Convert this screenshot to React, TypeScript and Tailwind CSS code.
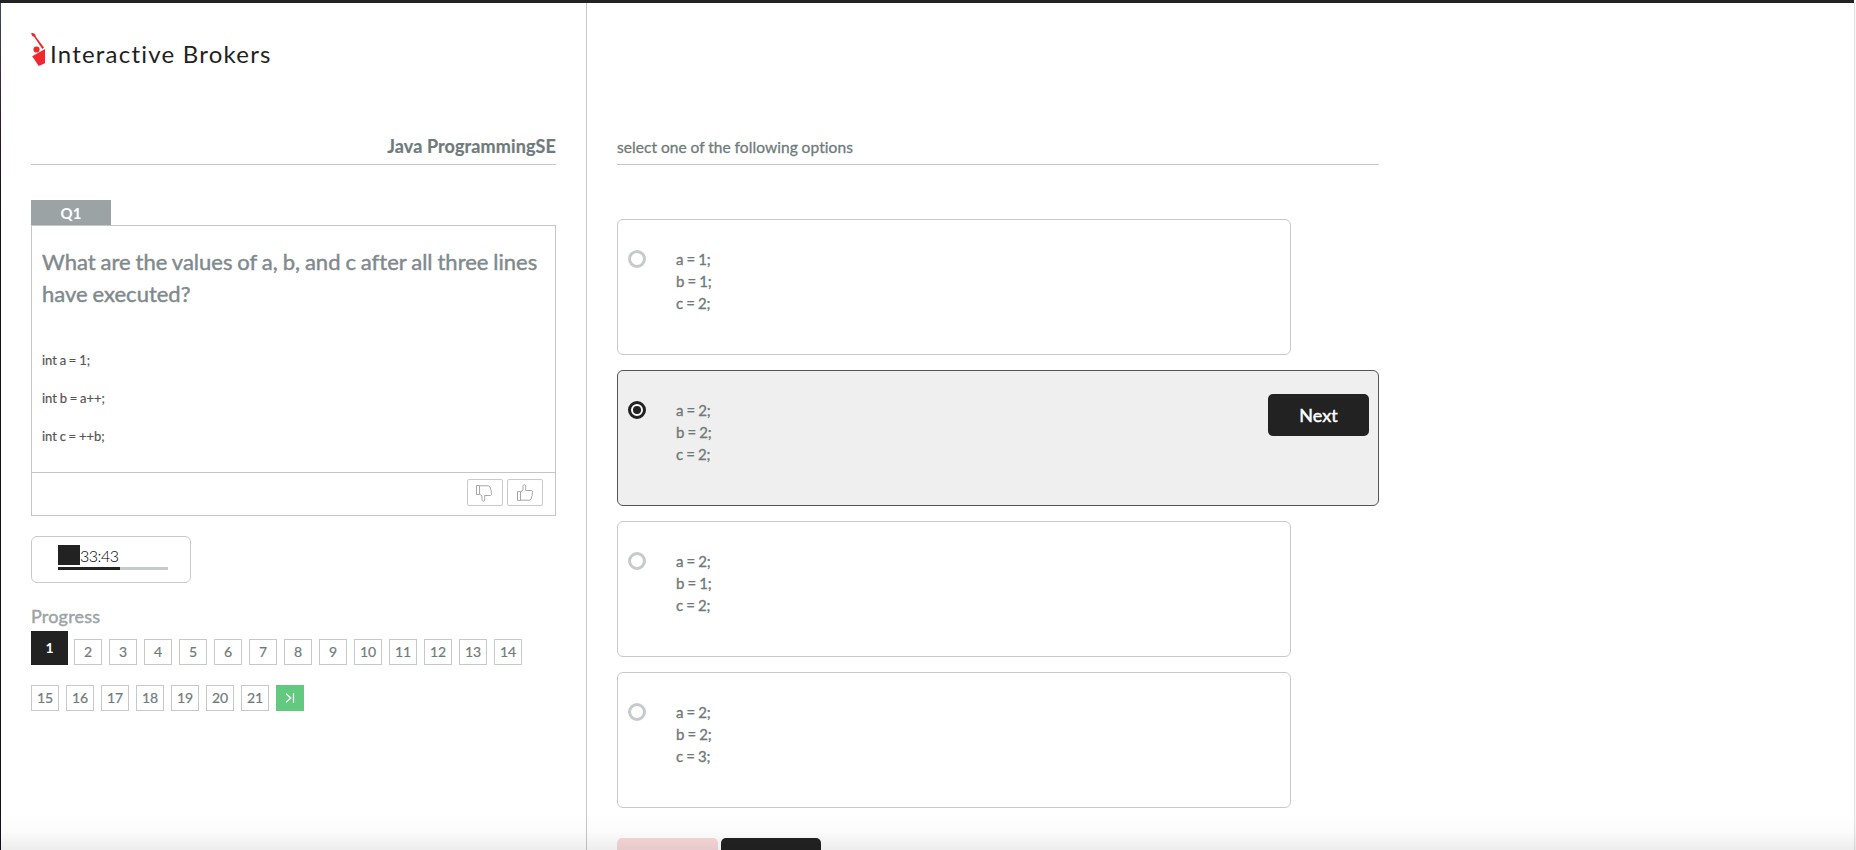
import React from "react";

const options = [
  { lines: ["a = 1;", "b = 1;", "c = 2;"], selected: false },
  { lines: ["a = 2;", "b = 2;", "c = 2;"], selected: true },
  { lines: ["a = 2;", "b = 1;", "c = 2;"], selected: false },
  { lines: ["a = 2;", "b = 2;", "c = 3;"], selected: false },
];

const firstRow = [2, 3, 4, 5, 6, 7, 8, 9, 10, 11, 12, 13, 14];
const secondRow = [15, 16, 17, 18, 19, 20, 21];

function Logo() {
  return (
    <div className="flex h-[34px] items-start">
      <svg width="16" height="34" viewBox="0 0 16 34" className="shrink-0">
        <path d="M0 .3L1.5 0l1.7.6 1.4 1.3.1 1.6L13 14.4l-1.7 1.5L3.2 4.1 1.3 3z" fill="#ee2a2e" />
        <circle cx="5.5" cy="16.5" r="3.1" fill="#ee2a2e" />
        <path d="M1.2 23.2L14 16v14.3L7.7 33z" fill="#ee2a2e" />
      </svg>
      <span className="ml-[3px] mt-[6px] whitespace-nowrap text-[24px] leading-[30px] tracking-[1.22px] text-[#231f20]">
        Interactive Brokers
      </span>
    </div>
  );
}

function Thumb({ down }: { down?: boolean }) {
  return (
    <button className="flex h-[27px] w-9 items-center justify-center rounded-[2px] border border-[#c8cbcc]">
      <svg width="18" height="18" viewBox="0 0 18 18" fill="none" stroke="#a5a8a9" strokeWidth="1" className={down ? "mr-0.5 -scale-y-100" : ""}>
        <path d="M1.5 7.5h3v9h-3zM4.5 8l2.5-2V1.8q.2-1 1.3-1t1.4 1v4.7h5.8q1.5.3 1 2l-.3 1.5.1 1.5-.8 1.3v1.2l-.8 1.2q-.3 1-1.4 1H4.5" />
      </svg>
    </button>
  );
}

function Cell({ n }: { n: number }) {
  return (
    <div className="flex h-[26px] w-7 items-center justify-center border border-[#c6c9ca] text-[14px] leading-4 text-[#6f7b7b] [-webkit-text-stroke:0.2px]">
      {n}
    </div>
  );
}

function Radio({ selected }: { selected: boolean }) {
  return selected ? (
    <div className="flex size-[18px] shrink-0 items-center justify-center rounded-full border-[3px] border-[#222] bg-white">
      <div className="size-2 rounded-full bg-[#222]" />
    </div>
  ) : (
    <div className="size-[18px] shrink-0 rounded-full border-[3px] border-[#c6cacc] bg-white" />
  );
}

export default function App() {
  return (
    <div className="relative flex h-[850px] w-[1856px] flex-col overflow-hidden bg-white font-['Lato',sans-serif] [font-variant-ligatures:none]">
      <div className="h-[3px] w-[1854px] shrink-0 bg-[#222]" />
      <div className="flex min-h-0 flex-1">
        <div className="w-px shrink-0 bg-gradient-to-b from-[#3d4a60] via-[#30182a] via-15% to-[#10131c] to-25%" />
        <aside className="w-[586px] shrink-0 border-r border-[#c4c6c8] pl-[30px] pr-[30px] pt-[30px]">
          <Logo />
          <div className="mt-[62px] flex h-9 items-center justify-end border-b border-[#c4c8ca] pb-0.5">
            <h1 className="whitespace-nowrap text-[18px] font-bold leading-6 tracking-[0.12px] text-[#6f7b7b] [-webkit-text-stroke:0.2px]">Java ProgrammingSE</h1>
          </div>

          <div className="mt-[35px] flex h-[26px] w-20 items-center justify-center bg-[#9ca3a5] text-[15px] font-bold text-white">Q1</div>
          <section className="-mt-px flex h-[291px] flex-col border border-[#c4c6c7]">
            <div className="flex h-[247px] flex-col border-b border-[#c4c6c7] pl-2.5 pt-5">
              <h2 className="whitespace-nowrap text-[22px] leading-8 text-[#7f8a8e] [-webkit-text-stroke:0.45px] [word-spacing:-0.7px]">
                What are the values of a, b, and c after all three lines
                <br />
                have executed?
              </h2>
              <pre className="mt-[31px] font-['Lato',sans-serif] text-[13px] leading-[38px] text-[#555] [-webkit-text-stroke:0.2px] [word-spacing:-0.6px]">{"int a = 1;\nint b = a++;\nint c = ++b;"}</pre>
            </div>
            <div className="flex justify-end gap-1 pr-3 pt-1.5">
              <Thumb down />
              <Thumb />
            </div>
          </section>

          <div className="mt-5 h-[47px] w-40 rounded-md border border-[#c6cacc] pl-[26px] pt-2">
            <div className="flex h-5 items-center">
              <div className="h-5 w-[22px] bg-[#222]" />
              <span className="pt-px text-[16px] font-light tracking-[-0.5px] text-black">33:43</span>
            </div>
            <div className="mt-0.5 h-[3px] w-[110px] bg-[#c6cacc]">
              <div className="h-full w-[62px] bg-[#222]" />
            </div>
          </div>

          <h3 className="mb-0.5 mt-5 text-[18px] leading-[26px] tracking-[0.2px] text-[#9da3a6] [-webkit-text-stroke:0.45px]">Progress</h3>
          <div className="flex h-[34px] items-end gap-[7px]">
            <div className="mr-[-1px] flex h-[34px] w-[37px] items-center justify-center bg-[#222] pb-0.5 text-[14px] font-bold text-white">1</div>
            {firstRow.map((n) => (
              <Cell key={n} n={n} />
            ))}
          </div>
          <div className="mt-5 flex gap-[7px]">
            {secondRow.map((n) => (
              <Cell key={n} n={n} />
            ))}
            <div className="flex h-[26px] w-7 items-center justify-center bg-[#61ca7e]">
              <svg width="10" height="10" viewBox="0 0 10 10" fill="none" stroke="#fff" strokeWidth="1.2">
                <path d="M1 .8L5.8 5 1 9.2M8.5.3v9.4" />
              </svg>
            </div>
          </div>
        </aside>

        <main className="w-[1267px] shrink-0 pl-[30px] pt-[126px]">
          <div className="flex h-9 w-[762px] items-center border-b border-[#c4c8ca] text-[15.5px] leading-5 tracking-[0.08px] text-[#6f7b7b] [-webkit-text-stroke:0.3px] [word-spacing:-0.3px]">
            select one of the following options
          </div>
          <div className="mt-[54px] flex flex-col gap-[15px]">
            {options.map((option, i) => (
              <div
                key={i}
                className={
                  option.selected
                    ? "flex h-[136px] w-[762px] rounded-md border border-[#555] bg-[#efefef] pl-2.5 pt-[30px]"
                    : "flex h-[136px] w-[674px] rounded-md border border-[#c6cacc] bg-white pl-2.5 pt-[30px]"
                }
              >
                <Radio selected={option.selected} />
                <div className="ml-[30px] mt-[-2px] text-[15px] leading-[22px] tracking-[-0.2px] text-[#6f7b7b] [-webkit-text-stroke:0.35px] [word-spacing:-0.4px]">
                  {option.lines.map((line) => (
                    <div key={line}>{line}</div>
                  ))}
                </div>
                {option.selected && (
                  <button className="-mt-[7px] ml-auto mr-[9px] h-[42px] w-[101px] rounded-[5px] bg-[#222] text-[18px] text-white [-webkit-text-stroke:0.45px]">Next</button>
                )}
              </div>
            ))}
          </div>
          <div className="mt-[30px] flex gap-[3px]">
            <div className="h-10 w-[101px] rounded-[5px] bg-[#f8d9da]" />
            <div className="h-10 w-[100px] rounded-[5px] bg-[#222]" />
          </div>
        </main>
        <div className="w-px shrink-0 bg-[#e1e1e1]" />
        <div className="w-px shrink-0 bg-[#f7f7f7]" />
      </div>
      <div className="pointer-events-none absolute inset-x-0 bottom-0 h-9 bg-gradient-to-b from-black/0 via-black/[0.015] to-black/[0.07]" />
    </div>
  );
}
